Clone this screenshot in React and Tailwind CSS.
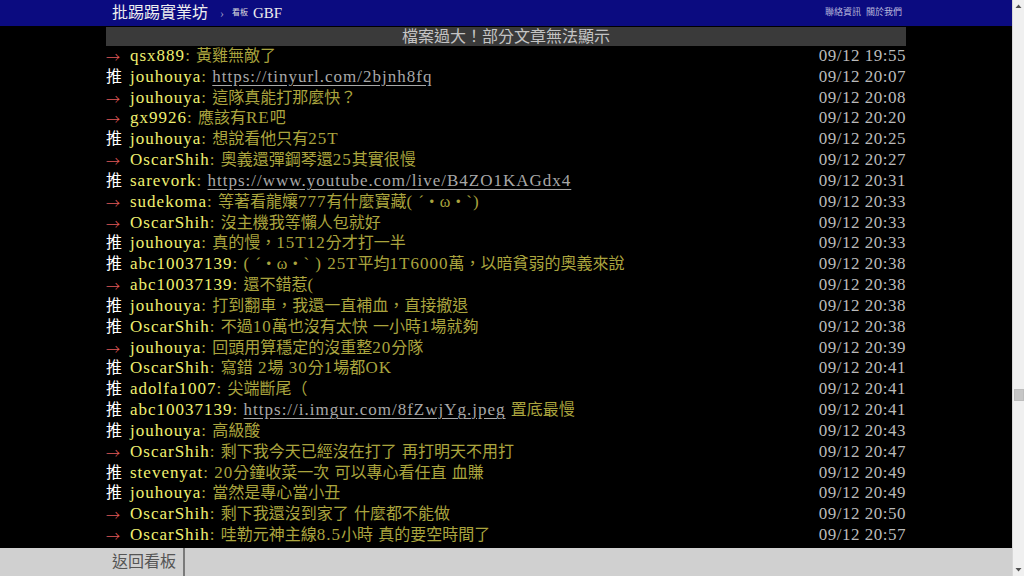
import React from "react";

const rows = [
  ["→", "qsx889", "黃雞無敵了", "09/12 19:55"],
  ["推", "jouhouya", "https://tinyurl.com/2bjnh8fq", "09/12 20:07"],
  ["→", "jouhouya", "這隊真能打那麼快？", "09/12 20:08"],
  ["→", "gx9926", "應該有RE吧", "09/12 20:20"],
  ["推", "jouhouya", "想說看他只有25T", "09/12 20:25"],
  ["→", "OscarShih", "奧義還彈鋼琴還25其實很慢", "09/12 20:27"],
  ["推", "sarevork", "https://www.youtube.com/live/B4ZO1KAGdx4", "09/12 20:31"],
  ["→", "sudekoma", "等著看龍孃777有什麼寶藏( ´・ω・`)", "09/12 20:33"],
  ["→", "OscarShih", "沒主機我等懶人包就好", "09/12 20:33"],
  ["推", "jouhouya", "真的慢，15T12分才打一半", "09/12 20:33"],
  ["推", "abc10037139", "( ´・ω・` ) 25T平均1T6000萬，以暗貧弱的奧義來說", "09/12 20:38"],
  ["→", "abc10037139", "還不錯惹(", "09/12 20:38"],
  ["推", "jouhouya", "打到翻車，我還一直補血，直接撤退", "09/12 20:38"],
  ["推", "OscarShih", "不過10萬也沒有太快 一小時1場就夠", "09/12 20:38"],
  ["→", "jouhouya", "回頭用算穩定的沒重整20分隊", "09/12 20:39"],
  ["推", "OscarShih", "寫錯 2場 30分1場都OK", "09/12 20:41"],
  ["推", "adolfa1007", "尖端斷尾（", "09/12 20:41"],
  ["推", "abc10037139", "https://i.imgur.com/8fZwjYg.jpeg 置底最慢", "09/12 20:41"],
  ["推", "jouhouya", "高級酸", "09/12 20:43"],
  ["→", "OscarShih", "剩下我今天已經沒在打了 再打明天不用打", "09/12 20:47"],
  ["推", "stevenyat", "20分鐘收菜一次 可以專心看任直 血賺", "09/12 20:49"],
  ["推", "jouhouya", "當然是專心當小丑", "09/12 20:49"],
  ["→", "OscarShih", "剩下我還沒到家了 什麼都不能做", "09/12 20:50"],
  ["→", "OscarShih", "哇勒元神主線8.5小時 真的要空時間了", "09/12 20:57"],
];

// ascii runs get the latin face, the rest falls back to the CJK face
const Mix = ({ t }) =>
  t.split(/([\x00-\x7f]+)/).map((s, i) =>
    !s ? null : /^[\x00-\x7f]/.test(s) ? (
      <span key={i} className="text-[17px] tracking-[1px]">{s}</span>
    ) : (
      <span key={i}>{s}</span>
    )
  );

const Content = ({ t }) =>
  t.split(/(https?:\/\/\S+)/).map((s, i) =>
    i % 2 ? (
      <span key={i} className="text-[#a8a8a8] underline underline-offset-[3px]">
        <Mix t={s} />
      </span>
    ) : (
      <Mix key={i} t={s} />
    )
  );

const PushRow = ({ tag, user, text, time }) => (
  <div className="h-[20.83px] leading-[20.83px] whitespace-pre">
    <span className="float-right text-[#bbbbbb] text-[17px] tracking-[0.5px]">{time}</span>
    {tag === "推" ? (
      <span className="inline-block w-6 h-[20.83px] align-top text-white">推</span>
    ) : (
      <span className="inline-block w-6 h-[20.83px] align-top text-[14px] text-[#e05a5a] font-['Noto_Sans_CJK_TC'] font-light">
        →
      </span>
    )}
    <span className="text-[#f0f070] text-[17px] tracking-[1px]">{user}</span>
    <span className="text-[#aaa43e]">
      <Mix t={": "} />
      <Content t={text} />
    </span>
  </div>
);

const Scrollbar = () => (
  <div className="w-[12px] h-full bg-[#f0f0f0] border-l border-[#d8d8d8] flex flex-col items-center">
    <svg width="7" height="10" viewBox="0 0 7 10" className="mt-[1px]">
      <path d="M0.5 7 L3.5 3.5 L6.5 7 Z" fill="#505050" />
    </svg>
    <div className="mt-[378px] w-[10px] h-[12px] bg-[#c6c6c6] border border-[#bdbdbd]" />
    <div className="flex-1" />
    <svg width="7" height="10" viewBox="0 0 7 10" className="mb-[1px]">
      <path d="M0.5 3 L3.5 6.5 L6.5 3 Z" fill="#505050" />
    </svg>
  </div>
);

export default function App() {
  return (
    <div
      className="flex w-full h-screen bg-black overflow-hidden"
      style={{ fontFamily: '"Liberation Serif", "Noto Sans CJK TC", serif' }}
    >
      <div className="flex-1 h-full flex flex-col overflow-hidden">
        <div className="h-[26px] shrink-0 bg-[#0b0b80]">
          <div className="w-[800px] mx-auto h-full flex items-center justify-between pl-[6px] pr-[4px]">
            <div className="flex items-center">
              <span className="text-[16px] text-[#eeeeee]">批踢踢實業坊</span>
              <span className="ml-[12px] text-[12px] text-[#9a9ac8]">›</span>
              <span className="ml-[8px] text-[8px] text-[#dddddd]">看板</span>
              <span className="ml-[5px] text-[15px] text-[#eeeeee]">GBF</span>
            </div>
            <div className="flex gap-[5px] text-[9px] text-[#b8b8dc]">
              <span>聯絡資訊</span>
              <span>關於我們</span>
            </div>
          </div>
        </div>

        <div className="w-[800px] mx-auto flex-1 overflow-hidden">
          <div className="mt-px h-[19px] leading-[19px] bg-[#3a3a3a] text-center text-[16px] text-[#c4c4c4]">
            檔案過大！部分文章無法顯示
          </div>
          <div className="text-[16px]">
            {rows.map(([tag, user, text, time], i) => (
              <PushRow key={i} tag={tag} user={user} text={text} time={time} />
            ))}
          </div>
        </div>

        <div className="h-[28px] shrink-0 bg-[#d0d0d0]">
          <div className="w-[800px] mx-auto h-full flex">
            <div className="h-full flex items-center pl-[6px] pr-[7px] border-r-2 border-[#7a7a7a] text-[16px] text-[#555555]">
              返回看板
            </div>
          </div>
        </div>
      </div>
      <Scrollbar />
    </div>
  );
}
